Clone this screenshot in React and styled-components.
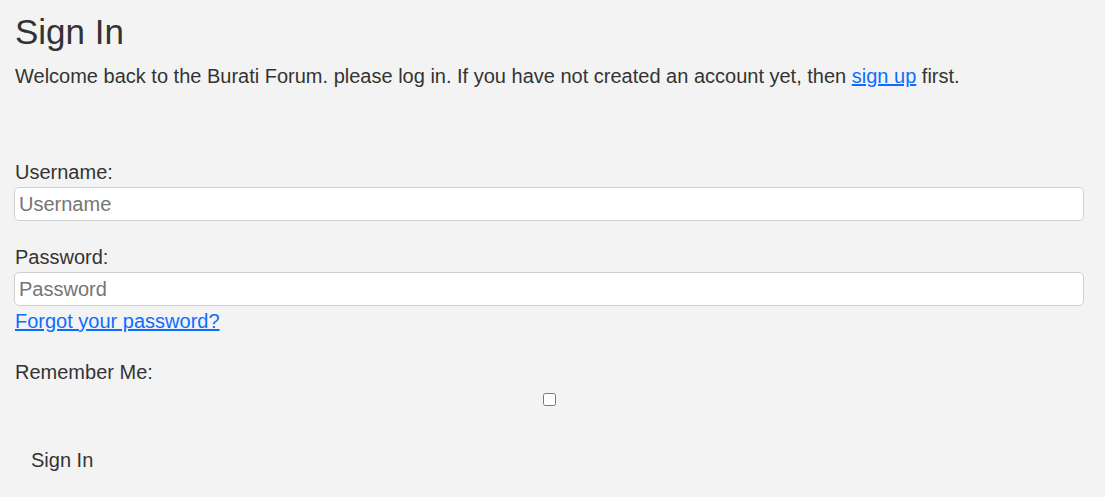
import React from "react";
import styled, { createGlobalStyle } from "styled-components";

const textColor = "#333333";
const linkColor = "#0d6efd";

const GlobalStyle = createGlobalStyle`
  html, body {
    margin: 0;
    padding: 0;
    background: #f3f3f3;
  }
  body {
    font-family: "Liberation Sans", Arial, sans-serif;
    color: ${textColor};
  }
`;

const Page = styled.main`
  display: flex;
  flex-direction: column;
  padding: 12px 21px 0 14px;
`;

const Title = styled.h1`
  margin: 0 0 13px 1px;
  font-size: 35px;
  font-weight: 400;
  line-height: 40px;
`;

const Intro = styled.p`
  margin: 0 0 0 1px;
  font-size: 20px;
  line-height: 23px;
`;

const Link = styled.a`
  color: ${linkColor};
  text-decoration: underline;
`;

const Form = styled.form`
  display: flex;
  flex-direction: column;
  margin-top: 73px;
`;

const Field = styled.div`
  display: flex;
  flex-direction: column;
  gap: 3px;
  margin-bottom: ${(p) => p.$gap || 0}px;
`;

const Label = styled.label`
  margin-left: 1px;
  font-size: 20px;
  line-height: 23px;
`;

const Input = styled.input`
  box-sizing: border-box;
  width: 100%;
  height: 34px;
  margin: 0;
  padding: 0 4px;
  border: 1px solid #cfcfcf;
  border-radius: 5px;
  background: #fff;
  font-family: inherit;
  font-size: 20px;
  color: ${textColor};
  outline: none;
  &::placeholder {
    color: #757575;
  }
`;

const ForgotLink = styled(Link)`
  margin: 1px 0 0 1px;
  font-size: 20px;
  line-height: 23px;
  align-self: flex-start;
`;

const RememberRow = styled.div`
  display: flex;
  flex-direction: column;
  margin-top: 28px;
`;

const Check = styled.input`
  align-self: center;
  width: 13px;
  height: 13px;
  margin: 9px 0 0;
`;

const SubmitButton = styled.button`
  align-self: flex-start;
  margin-top: 35px;
  padding: 8px 17px;
  border: none;
  background: transparent;
  font-family: inherit;
  font-size: 20px;
  line-height: 23px;
  color: ${textColor};
  cursor: pointer;
`;

export default function App() {
  return (
    <>
      <GlobalStyle />
      <Page>
        <Title>Sign In</Title>
        <Intro>
          Welcome back to the Burati Forum. please log in. If you have not
          created an account yet, then <Link href="#">sign up</Link> first.
        </Intro>
        <Form onSubmit={(e) => e.preventDefault()}>
          <Field $gap={25}>
            <Label htmlFor="username">Username:</Label>
            <Input id="username" type="text" placeholder="Username" />
          </Field>
          <Field>
            <Label htmlFor="password">Password:</Label>
            <Input id="password" type="password" placeholder="Password" />
            <ForgotLink href="#">Forgot your password?</ForgotLink>
          </Field>
          <RememberRow>
            <Label htmlFor="remember">Remember Me:</Label>
            <Check id="remember" type="checkbox" />
          </RememberRow>
          <SubmitButton type="submit">Sign In</SubmitButton>
        </Form>
      </Page>
    </>
  );
}
